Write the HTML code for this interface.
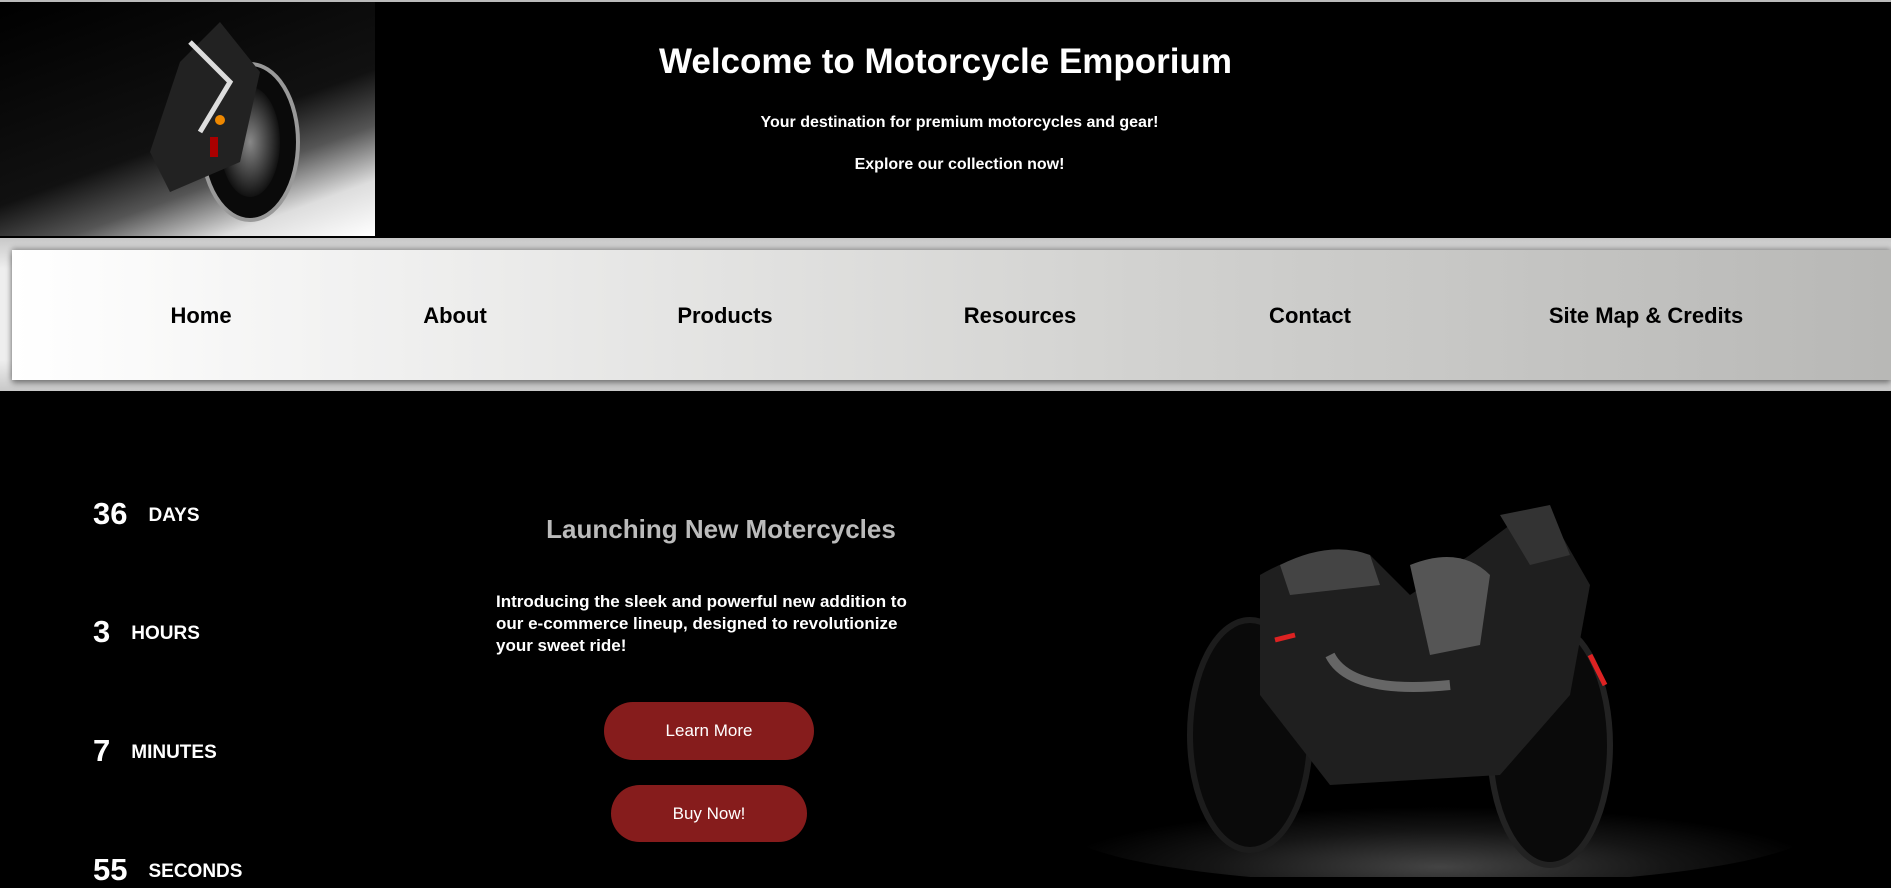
<!DOCTYPE html>
<html><head><meta charset="utf-8"><style>
*{margin:0;padding:0;box-sizing:border-box}
body{width:1891px;height:877px;overflow:hidden;background:#000;font-family:"Liberation Sans",Arial,sans-serif;position:relative}
.abs{position:absolute}
.hdr{left:0;top:0;width:1891px;height:238px;background:#000;border-top:2px solid #bbb}
.himg{left:0;top:2px;width:375px;height:234px;background:linear-gradient(160deg,#000 0%,#111 55%,#555 70%,#ddd 85%,#fff 100%);overflow:hidden}
.t{color:#fff;font-weight:bold;text-align:center;width:1891px;left:14px}
.navw{left:0;top:238px;width:1891px;height:153px;background:linear-gradient(#c8c8c8,#eee 20%,#eee 80%,#c8c8c8)}
.nav{left:12px;top:250px;width:1879px;height:130px;background:linear-gradient(90deg,#fff,#d2d2d0 60%,#b8b8b6);box-shadow:0 3px 6px rgba(0,0,0,.45),0 -2px 5px rgba(0,0,0,.25)}
.nl{top:303px;font-size:22px;font-weight:bold;color:#000;transform:translateX(-50%);white-space:nowrap}
.cd{color:#fff;font-weight:bold;white-space:nowrap}
.cd b{font-size:31px;margin-right:21px;vertical-align:-3px}
.cd span{font-size:19px}
.btn{background:#861c1c;color:#fff;border-radius:29px;text-align:center;font-size:17px}
</style></head><body>
<div class="abs hdr"></div>
<div class="abs himg">
<svg width="375" height="234" viewBox="0 0 375 234">
<defs><radialGradient id="w" cx=".5" cy=".5" r=".5"><stop offset="0" stop-color="#888"/><stop offset="1" stop-color="#111"/></radialGradient></defs>
<ellipse cx="250" cy="140" rx="48" ry="78" fill="#0a0a0a" stroke="#999" stroke-width="4"/>
<ellipse cx="250" cy="140" rx="30" ry="55" fill="url(#w)"/>
<path d="M150 150 L180 60 L220 20 L260 70 L240 160 L170 190 Z" fill="#222"/>
<path d="M190 40 L230 80 L200 130" stroke="#ddd" stroke-width="5" fill="none"/>
<circle cx="220" cy="118" r="5" fill="#e80"/>
<rect x="210" y="135" width="8" height="20" fill="#a00"/>
</svg></div>
<div class="abs t" style="top:42px;font-size:35px;left:0">Welcome to Motorcycle Emporium</div>
<div class="abs t" style="top:114px;font-size:16px">Your destination for premium motorcycles and gear!</div>
<div class="abs t" style="top:156px;font-size:16px">Explore our collection now!</div>
<div class="abs navw"></div>
<div class="abs nav"></div>
<div class="abs nl" style="left:201px">Home</div>
<div class="abs nl" style="left:455px">About</div>
<div class="abs nl" style="left:725px">Products</div>
<div class="abs nl" style="left:1020px">Resources</div>
<div class="abs nl" style="left:1310px">Contact</div>
<div class="abs nl" style="left:1646px">Site Map &amp; Credits</div>
<div class="abs cd" style="left:93px;top:496px"><b>36</b><span>DAYS</span></div>
<div class="abs cd" style="left:93px;top:614px"><b>3</b><span>HOURS</span></div>
<div class="abs cd" style="left:93px;top:733px"><b>7</b><span>MINUTES</span></div>
<div class="abs cd" style="left:93px;top:852px"><b>55</b><span>SECONDS</span></div>
<div class="abs" style="left:421px;width:600px;top:514px;text-align:center;color:#bbb;font-size:26px;font-weight:bold">Launching New Motercycles</div>
<div class="abs" style="left:496px;top:591px;width:425px;color:#fff;font-size:17px;font-weight:bold;line-height:22px">Introducing the sleek and powerful new addition to our e&#8209;commerce lineup, designed to revolutionize your sweet ride!</div>
<div class="abs btn" style="left:604px;top:702px;width:210px;height:58px;line-height:58px">Learn More</div>
<div class="abs btn" style="left:611px;top:785px;width:196px;height:57px;line-height:57px">Buy Now!</div>
<svg class="abs" style="left:1030px;top:495px" width="790" height="382" viewBox="0 0 790 382">
<defs><radialGradient id="g" cx=".5" cy=".85" r=".5"><stop offset="0" stop-color="#444"/><stop offset=".6" stop-color="#151515"/><stop offset="1" stop-color="#000"/></radialGradient></defs>
<ellipse cx="410" cy="330" rx="380" ry="60" fill="url(#g)"/>
<ellipse cx="220" cy="240" rx="60" ry="115" fill="#0a0a0a" stroke="#1c1c1c" stroke-width="6"/>
<ellipse cx="520" cy="250" rx="60" ry="120" fill="#0a0a0a" stroke="#222" stroke-width="6"/>
<path d="M230 80 Q280 50 340 60 L380 100 L440 60 L480 30 L520 20 L560 90 L540 200 L470 280 L300 290 L230 200 Z" fill="#1f1f1f"/>
<path d="M250 70 Q300 45 340 60 L350 90 L260 100 Z" fill="#444"/>
<path d="M380 70 Q430 50 460 80 L450 150 L400 160 Z" fill="#555"/>
<path d="M300 160 Q320 200 420 190" stroke="#666" stroke-width="10" fill="none"/>
<path d="M470 20 L520 10 L540 60 L500 70 Z" fill="#333"/>
<path d="M245 145 L265 140" stroke="#d22" stroke-width="5"/>
<path d="M560 160 L575 190" stroke="#d22" stroke-width="5"/>
</svg>
</body></html>
